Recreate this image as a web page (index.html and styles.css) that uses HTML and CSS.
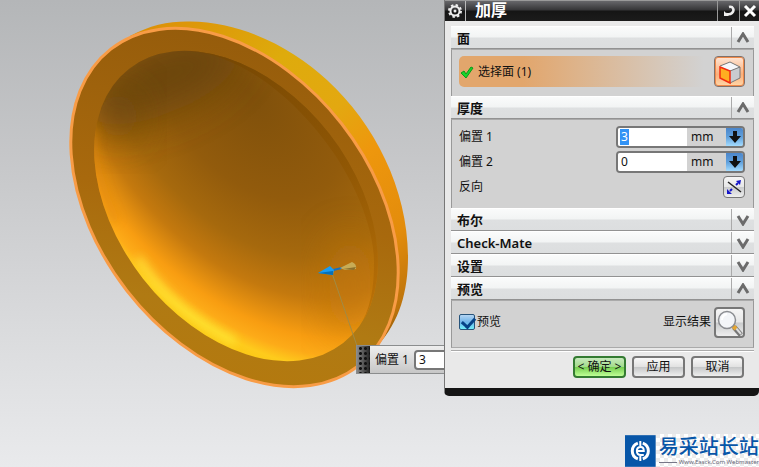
FILE: index.html
```html
<!DOCTYPE html>
<html lang="zh-CN">
<head>
<meta charset="utf-8">
<title>加厚</title>
<link rel="stylesheet" href="styles.css">
</head>
<body>
<main class="workspace">
  <svg class="scene" width="445" height="467" viewBox="0 0 445 467" aria-hidden="true">
    <defs>
      <linearGradient id="side" gradientUnits="userSpaceOnUse" x1="150" y1="20" x2="410" y2="340">
        <stop offset="0" stop-color="#dc9008"/><stop offset=".27" stop-color="#deab0c"/>
        <stop offset=".45" stop-color="#e3a810"/><stop offset=".58" stop-color="#ee970d"/>
        <stop offset=".78" stop-color="#e38c0c"/><stop offset=".92" stop-color="#bd740c"/><stop offset="1" stop-color="#7a4b06"/>
      </linearGradient>
      <linearGradient id="rim" gradientUnits="userSpaceOnUse" x1="270" y1="27" x2="200" y2="388">
        <stop offset="0" stop-color="#945b0b"/><stop offset=".5" stop-color="#a8690d"/>
        <stop offset=".78" stop-color="#b07a13"/><stop offset="1" stop-color="#b4790e"/>
      </linearGradient>
      <radialGradient id="bowl" gradientUnits="userSpaceOnUse" cx="0" cy="0" r="1.1" gradientTransform="translate(-80 -80) scale(300 195)">
        <stop offset="0" stop-color="#7f500b"/><stop offset=".36" stop-color="#925b0c"/>
        <stop offset=".56" stop-color="#a6690d"/><stop offset=".7" stop-color="#c4790e"/>
        <stop offset=".84" stop-color="#f89d11"/><stop offset=".9" stop-color="#fdab18"/>
        <stop offset=".95" stop-color="#fecb1c"/><stop offset="1" stop-color="#fbc813"/>
      </radialGradient>
      <linearGradient id="lip" gradientUnits="userSpaceOnUse" x1="250" y1="50" x2="370" y2="330">
        <stop offset="0" stop-color="#774701"/><stop offset=".5" stop-color="#905602"/><stop offset="1" stop-color="#ba7006"/>
      </linearGradient>
      <clipPath id="face"><ellipse cx="234.500" cy="207.500" rx="201" ry="136" transform="rotate(52 234.500 207.500)"/></clipPath>
      <clipPath id="hollow"><ellipse cx="236" cy="206" rx="174" ry="118" transform="rotate(52 236 206)"/></clipPath>
      <filter id="soft" x="-60%" y="-60%" width="220%" height="220%"><feGaussianBlur stdDeviation="20"/></filter>
      <filter id="glow" x="-50%" y="-50%" width="200%" height="200%"><feGaussianBlur stdDeviation="5"/></filter>
    </defs>
    <path fill="url(#side)" d="M130 36C150 25 170 21 190 21.500C245 22 295 50 327 80C375 124 408 190 408 257C408 290 400 322 377 346L240 220Z"/>
    <path d="M60 20H410V395H60Z" fill="url(#rim)" clip-path="url(#face)"/>
    <ellipse cx="234.500" cy="207.500" rx="201" ry="136" transform="rotate(52 234.500 207.500)" fill="none" stroke="#f89c46" stroke-width="3"/>
    <g transform="translate(236 206) rotate(52)"><ellipse rx="174" ry="118" fill="url(#bowl)"/></g>
    <g clip-path="url(#hollow)">
      <ellipse cx="160" cy="78" rx="85" ry="36" transform="rotate(-22 160 78)" fill="#60400b" opacity=".75" filter="url(#soft)"/>
      <ellipse cx="118" cy="116" rx="22" ry="26" fill="#64430b" opacity=".6" filter="url(#soft)"/>
      <ellipse cx="350" cy="285" rx="22" ry="50" fill="#c0760d" opacity=".7" filter="url(#soft)"/>
      <path d="M93 128C92 160 100 190 116 222" fill="none" stroke="#d5810d" stroke-width="9" opacity=".45" filter="url(#glow)"/>
      <path d="M138 258C157 288 185 318 235 342" fill="none" stroke="#ffec3d" stroke-width="7" opacity=".85" filter="url(#glow)"/>
      <path d="M190 51C245 56 300 103 335 155C362 196 374 235 374 262C374 288 371 308 358 330L395 330V40H190Z" fill="url(#lip)" opacity=".75"/>
    </g>
    <path d="M332 273L357 346" stroke="#a18b45"/>
    <path d="M329 271L346 267" stroke="#1872bf" stroke-width="2"/>
    <path d="M318 273L330 266L334 270L333 275Z" fill="#189df5"/>
    <path d="M318 273L333 271V275Z" fill="#0870b6"/>
    <path d="M340 268L352 262Q357 264 356 269L345 270Z" fill="#c8ac55"/>
    <path d="M343 269L356 267L354 270Z" fill="#8b702c"/>
  </svg>

  <div class="onscreen">
    <span class="grip"></span>
    <label for="quick">偏置 1</label>
    <input id="quick" value="3">
  </div>

  <section class="dialog" aria-labelledby="title">
    <header class="titlebar">
      <button class="tool" aria-label="选项"><svg width="16" height="16" viewBox="0 0 16 16"><circle cx="8" cy="8" r="4.500" fill="none" stroke="#eee" stroke-width="2"/><circle cx="8" cy="8" r="6" fill="none" stroke="#eee" stroke-width="2" stroke-dasharray="2.400 2.300"/><circle cx="8" cy="8" r="1.500" fill="#eee"/></svg></button>
      <h1 id="title">加厚</h1>
      <button class="tool" aria-label="重置"><svg width="14" height="14" viewBox="0 0 14 14"><path d="M7 3C11 2 13 6 10 9Q8 11 4 10" fill="none" stroke="#eee" stroke-width="2.500"/><path d="M2 7V12H7Z" fill="#eee"/></svg></button>
      <button class="tool" aria-label="关闭"><svg width="14" height="14" viewBox="0 0 14 14"><path d="M2 2L12 12M12 2L2 12" stroke="#fff" stroke-width="3"/></svg></button>
    </header>

    <div class="content">
      <h2 class="head"><span>面</span><button aria-label="折叠"><svg width="14" height="12" viewBox="0 0 14 12"><path d="M2 10L7 2L12 10" /></svg></button></h2>
      <div class="group face">
        <div class="select">
          <svg width="14" height="14" viewBox="0 0 14 14"><path d="M1 8L4 6L6 9L11 2L13 3L6 13Z" fill="#18d42b" stroke="#0c9a1a"/></svg>
          <span>选择面 (1)</span>
        </div>
        <button class="icon cube" aria-label="面规则"><svg width="26" height="26" viewBox="0 0 26 26"><path d="M3 7L13 3L23 8L13 12Z" fill="#f6f7fa"/><path d="M13 12L23 8V19L13 24Z" fill="#c9cbcf"/><path d="M3 7L13 3L23 8V19L13 24M13 12L23 8" fill="none" stroke="#777" /><path d="M3 8L13 12V24L3 19Z" fill="#ffae21" stroke="#f22c12" stroke-width="1.500"/></svg></button>
      </div>

      <h2 class="head"><span>厚度</span><button aria-label="折叠"><svg width="14" height="12" viewBox="0 0 14 12"><path d="M2 10L7 2L12 10" /></svg></button></h2>
      <div class="group rows">
        <div class="row"><label for="o1">偏置 1</label><div class="field"><span class="entry"><input id="o1" class="picked" value="3"></span><span class="unit">mm</span><button aria-label="偏置 1 选项"><svg width="14" height="14" viewBox="0 0 14 14"><path d="M5 1H9V6H13L7 13L1 6H5Z" fill="#111"/></svg></button></div></div>
        <div class="row"><label for="o2">偏置 2</label><div class="field"><span class="entry"><input id="o2" value="0"></span><span class="unit">mm</span><button aria-label="偏置 2 选项"><svg width="14" height="14" viewBox="0 0 14 14"><path d="M5 1H9V6H13L7 13L1 6H5Z" fill="#111"/></svg></button></div></div>
        <div class="row"><span>反向</span><button class="icon flip" aria-label="反向"><svg width="18" height="18" viewBox="0 0 18 18"><path d="M3 4L16 14" stroke="#222" stroke-width="1.500"/><path d="M5 13L7 11M11 7L13 5" stroke="#1515c8" stroke-width="2"/><path d="M11 3L16 2L15 7ZM2 11V16H7Z" fill="#1515c8"/></svg></button></div>
      </div>

      <h2 class="head"><span>布尔</span><button aria-label="展开"><svg width="14" height="12" viewBox="0 0 14 12"><path d="M2 2L7 10L12 2" /></svg></button></h2>
      <h2 class="head"><span>Check-Mate</span><button aria-label="展开"><svg width="14" height="12" viewBox="0 0 14 12"><path d="M2 2L7 10L12 2" /></svg></button></h2>
      <h2 class="head"><span>设置</span><button aria-label="展开"><svg width="14" height="12" viewBox="0 0 14 12"><path d="M2 2L7 10L12 2" /></svg></button></h2>
      <h2 class="head"><span>预览</span><button aria-label="折叠"><svg width="14" height="12" viewBox="0 0 14 12"><path d="M2 10L7 2L12 10" /></svg></button></h2>
      <div class="group preview">
        <label class="check"><input type="checkbox" checked>预览</label>
        <label for="result">显示结果</label>
        <button id="result" class="icon"><svg width="28" height="28" viewBox="0 0 28 28"><path d="M18 18L25 26" stroke="#777" stroke-width="5"/><path d="M19 18L25 25" stroke="#ddd" stroke-width="2"/><path d="M17 17L20 20" stroke="#e5a632" stroke-width="4"/><circle cx="11" cy="11" r="8.500" fill="#f3f5f8" stroke="#8b8d91" stroke-width="1.500"/><path d="M6 11Q6 6 11 5" fill="none" stroke="#fff" stroke-width="2"/></svg></button>
      </div>
      <footer class="actions">
        <button class="ok">&lt; 确定 &gt;</button><button>应用</button><button>取消</button>
      </footer>
    </div>
  </section>

  <div class="brand">
    <svg width="31" height="32" viewBox="0 0 31 32"><path d="M0 0H31V32H0Z" fill="#0756a8"/><path d="M13 8A8.500 8.500 0 0 0 13 24M18 8A8.500 8.500 0 0 1 18 24" fill="none" stroke="#fff" stroke-width="3"/><path d="M12 16H19Q19 12 16 12Q12 12 12 16Q12 20 16 20H19M15.500 6V11M15.500 21V26" fill="none" stroke="#fff" stroke-width="2"/></svg>
    <div class="words"><strong>易采站长站</strong><small>Www.Easck.Com Webmaster</small></div>
  </div>
</main>
</body>
</html>
```
FILE: styles.css
```css
* { box-sizing: border-box; }
body {
  margin: 0;
  font: 12px/16px "Noto Sans", "Noto Sans CJK SC", sans-serif;
  color: #111;
}
button, input { font: inherit; color: inherit; margin: 0; padding: 0; }
.workspace {
  position: relative;
  display: flex;
  min-height: 100vh;
  justify-content: flex-end;
  align-items: flex-start;
  overflow: hidden;
  background: linear-gradient(#b4b6b8, #c8c9cb 38%, #dedfe1 78%, #e9eaec);
}
.scene { position: absolute; left: 0; top: 0; }

.onscreen {
  position: absolute;
  left: 356px;
  top: 345px;
  display: flex;
  align-items: center;
  gap: 5px;
  height: 29px;
  border: 1px solid #8b8d8e;
  background: linear-gradient(#eee, #c7c7c7);
}
.onscreen input {
  width: 60px;
  height: 20px;
  padding-left: 3px;
  border: 2px solid #777;
  border-radius: 4px;
  background: #fff;
}
.grip {
  align-self: stretch;
  width: 13px;
  background:
    radial-gradient(circle, #111 1px, transparent 2px) 1px 5px / 5px 5px,
    linear-gradient(90deg, #888, #222);
}

.dialog {
  position: relative;
  width: 315px;
  border-left: 1px solid #777;
  border-bottom: 8px solid #151515;
  border-radius: 0 0 5px 5px;
  background: #e9e9e9;
}
.titlebar {
  display: flex;
  height: 21px;
  border-top: 1px solid #999;
  background: linear-gradient(#67676a, #353537 45%, #151515 50%, #1b1b1b);
}
.titlebar h1 {
  flex: 1;
  margin: 0;
  padding-left: 9px;
  border-left: 1px solid #bbb;
  font-size: 16px;
  line-height: 18px;
  font-weight: 600;
  color: #fff;
}
.tool {
  display: grid;
  place-items: center;
  width: 20px;
  border: 0;
  background: none;
}
.titlebar h1 ~ .tool { border-left: 1px solid #999; }
.titlebar h1 + .tool { width: 22px; }
.content { padding: 5px 5px 10px 6px; }
.head {
  display: flex;
  height: 23px;
  margin: 0;
  border-top: 1px solid #fff;
  border-bottom: 1px solid #929292;
  background: linear-gradient(#fafbfb, #f2f4f4 49%, #dee0e1 51%, #dcdedf);
  font-size: 13px;
  line-height: 22px;
  font-weight: 600;
}
.head span { flex: 1; padding-left: 6px; }
.head button {
  display: grid;
  place-items: center;
  width: 23px;
  border: 0;
  border-left: 1px solid #aaa;
  background: none;
}
.head path { fill: none; stroke: #6b6b6b; stroke-width: 3; }
.group {
  border: 1px solid #999;
  border-top-color: #aaa;
  border-bottom: 0;
  background: #d2d2d2;
}
.face {
  display: flex;
  height: 47px;
  padding: 6px 8px 9px 7px;
}
.select {
  display: flex;
  flex: 1;
  align-items: center;
  gap: 4px;
  height: 31px;
  padding-left: 1px;
  border-radius: 5px;
  background: linear-gradient(90deg, #e2a66c 25%, #d2d2d2 96%);
}
.icon {
  display: grid;
  place-items: center;
  width: 31px;
  height: 31px;
  border: 2px solid #777;
  border-radius: 4px;
  background: linear-gradient(#f5f5f5, #e7e7e7 49%, #c9cbcc 51%, #eee);
}
.cube {
  border: 1px solid #80706a;
  background: linear-gradient(#ffe6d6, #fbb07c 60%, #ffd7a9);
  box-shadow: inset 0 0 0 1px #f18a49;
}
.rows { height: 89px; padding: 6px 8px 0 7px; }
.row {
  display: flex;
  justify-content: space-between;
  align-items: center;
  height: 22px;
  margin-bottom: 3px;
}
.field {
  display: flex;
  width: 129px;
  height: 22px;
  border: 2px solid #777;
  border-radius: 4px;
  overflow: hidden;
  background: #d2d2d2;
}
.entry { width: 69px; padding: 1px 2px; background: #fff; }
.entry input {
  width: 20px;
  height: 16px;
  padding-left: 1px;
  border: 0;
  background: none;
}
.entry .picked { width: 9px; background: #3293f5; color: #fff; }
.unit { flex: 1; padding-left: 4px; line-height: 18px; }
.field button {
  display: grid;
  place-items: center;
  width: 17px;
  border: 0;
  background: linear-gradient(#4b86cb, #60a0dc 50%, #a4dcff);
}
.flip { width: 22px; height: 22px; border-width: 1px; }
.preview {
  display: flex;
  align-items: center;
  gap: 3px;
  height: 48px;
  padding: 0 8px 4px 7px;
  border-bottom: 1px solid #aaa;
}
.check { display: flex; align-items: center; gap: 2px; margin-right: auto; }
.check input {
  appearance: none;
  width: 16px;
  height: 16px;
  border: 1px solid #27547b;
  border-radius: 2px;
  background: linear-gradient(#b4d5f3, #6fb4e9 50%, #6ff0fb);
}
.check input::after {
  content: "";
  display: block;
  width: 6px;
  height: 10px;
  margin-left: 4px;
  border: solid #064287;
  border-width: 0 3px 3px 0;
  transform: rotate(42deg);
}
.actions {
  display: flex;
  justify-content: flex-end;
  gap: 6px;
  margin-top: 2px;
  padding: 5px 10px 0 0;
  border-top: 1px solid #aaa;
  box-shadow: inset 0 1px #fff;
}
.actions button {
  width: 53px;
  height: 22px;
  border: 2px solid #777;
  border-radius: 4px;
  background: linear-gradient(#f8f8f8, #e2e2e2 49%, #c5c7c8 51%, #eee);
  white-space: nowrap;
}
.actions .ok {
  border-color: #347b32;
  background: linear-gradient(#c8e9be, #a2dc8b 49%, #74cd4f 51%, #bfff96);
}
.brand {
  position: absolute;
  right: 0;
  bottom: 0;
  display: flex;
  align-items: center;
  width: 134px;
  height: 33px;
}
.words {
  flex: 1;
  height: 33px;
  padding-left: 3px;
  background: repeating-conic-gradient(#fff 0 25%, #ececec 0 50%) 0 0 / 8px 8px;
}
.words strong {
  display: block;
  font-family: "Noto Sans CJK SC", sans-serif;
  font-size: 20px;
  line-height: 24px;
  font-weight: 500;
  color: #0756a8;
  white-space: nowrap;
}
.words small {
  display: block;
  padding-left: 20px;
  font-size: 6px;
  line-height: 9px;
  color: #667;
  white-space: nowrap;
  background: linear-gradient(#778, #778) 0 4px / 18px 1px no-repeat;
}
```
